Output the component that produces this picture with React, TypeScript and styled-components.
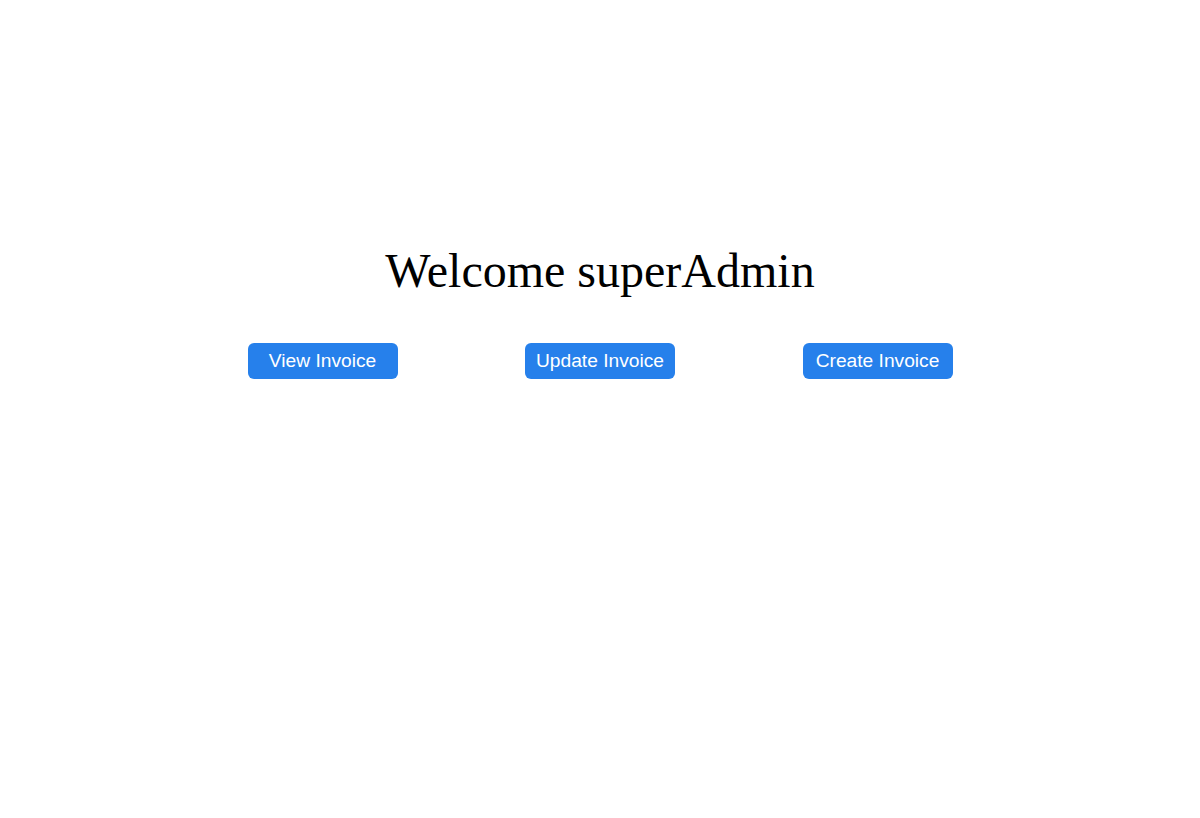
import React from "react";
import styled, { createGlobalStyle } from "styled-components";

const GlobalStyle = createGlobalStyle`
  html, body {
    margin: 0;
    padding: 0;
    background: #ffffff;
  }
  body {
    font-family: "Liberation Serif", "Times New Roman", serif;
  }
`;

const Page = styled.main`
  display: flex;
  flex-direction: column;
  align-items: center;
  padding-top: 244px;
  min-height: 818px;
  box-sizing: border-box;
`;

const Title = styled.h1`
  margin: 0;
  font-family: "Liberation Serif", "Times New Roman", serif;
  font-weight: 400;
  font-size: 48px;
  line-height: 53px;
  color: #000;
`;

const ButtonRow = styled.div`
  display: flex;
  justify-content: space-evenly;
  width: 960px;
  margin-top: 46px;
`;

const ActionButton = styled.button`
  width: 150px;
  height: 36px;
  padding: 0;
  border: none;
  border-radius: 6px;
  background: #2680eb;
  color: #ffffff;
  font-family: "Liberation Sans", Arial, sans-serif;
  font-size: 19.2px;
  cursor: pointer;
`;

export default function App() {
  return (
    <>
      <GlobalStyle />
      <Page>
        <Title>Welcome superAdmin</Title>
        <ButtonRow>
          <ActionButton>View Invoice</ActionButton>
          <ActionButton>Update Invoice</ActionButton>
          <ActionButton>Create Invoice</ActionButton>
        </ButtonRow>
      </Page>
    </>
  );
}
